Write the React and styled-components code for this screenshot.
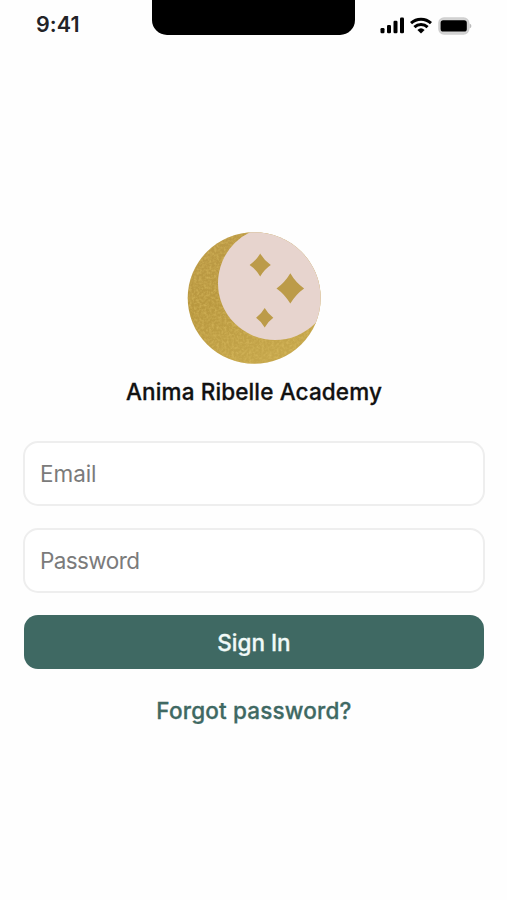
import React from "react";
import styled, { createGlobalStyle } from "styled-components";

const GlobalStyle = createGlobalStyle`
  * {
    box-sizing: border-box;
  }
  body {
    margin: 0;
    background: #fefefe;
    font-family: Inter, "Liberation Sans", sans-serif;
  }
`;

const SignalIcon = () => (
  <svg width="24" height="17" viewBox="0 0 24 17">
    <rect x="0.5" y="11" width="4" height="5.3" rx="1.2" />
    <rect x="7" y="8" width="4" height="8.3" rx="1.2" />
    <rect x="13.5" y="3.8" width="4" height="12.5" rx="1.2" />
    <rect x="20" y="0.6" width="4" height="15.7" rx="1.2" />
  </svg>
);

const WifiIcon = () => (
  <svg width="22" height="17" viewBox="0 0 22 17">
    <g fill="none" stroke="#000" strokeWidth="3">
      <path d="M1 6.1a14.6 14.6 0 0 1 20 0" />
      <path d="M4.4 10.2a9.6 9.6 0 0 1 13.2 0" />
    </g>
    <path d="M7.4 12.9a5.4 5.4 0 0 1 7.2 0L11 16.4z" />
  </svg>
);

const BatteryIcon = () => (
  <svg width="34" height="18" viewBox="0 0 34 18">
    <rect x="1" y="1" width="29.6" height="16" rx="5" fill="#d4d4d4" stroke="#cfcfcf" strokeWidth="1.6" />
    <rect x="2.6" y="3.3" width="26.2" height="11.2" rx="2.6" />
    <path d="M31.6 6.6q1.8.8 1.8 2.4t-1.8 2.4z" fill="#bbb" />
  </svg>
);

// four-pointed star around a centre
const star = (x, y, w, h) =>
  `M${x} ${y - h}Q${x + w * 0.4} ${y - h * 0.38} ${x + w} ${y}` +
  `Q${x + w * 0.4} ${y + h * 0.38} ${x} ${y + h}` +
  `Q${x - w * 0.4} ${y + h * 0.38} ${x - w} ${y}` +
  `Q${x - w * 0.4} ${y - h * 0.38} ${x} ${y - h}z`;

const MoonLogo = () => (
  <svg width="134" height="132" viewBox="0 0 134 132">
    <defs>
      <clipPath id="disc">
        <ellipse cx="67.2" cy="66" rx="66.5" ry="65.7" />
      </clipPath>
      <linearGradient id="gold" x1="0" y1="0" x2="0.5" y2="1">
        <stop offset="0" stopColor="#bc9a48" />
        <stop offset="0.5" stopColor="#b9983f" />
        <stop offset="1" stopColor="#c5a64b" />
      </linearGradient>
      {/* foil grain */}
      <filter id="grain" x="0" y="0" width="100%" height="100%" colorInterpolationFilters="sRGB">
        <feTurbulence type="fractalNoise" baseFrequency="0.4" numOctaves="2" seed="4" />
        <feColorMatrix values="0 0 0 0 0.86  0 0 0 0 0.74  0 0 0 0 0.38  1.3 0 0 0 -0.5" />
      </filter>
    </defs>
    <g clipPath="url(#disc)">
      <rect width="134" height="132" fill="url(#gold)" />
      <rect width="134" height="132" filter="url(#grain)" />
      <ellipse cx="88" cy="51.2" rx="57" ry="56.8" fill="#e7d4ce" />
      <path
        fill="#bc9b49"
        d={star(73.2, 33, 10.6, 11.4) + star(103.3, 56.4, 13.8, 15.2) + star(77.7, 85.7, 8.6, 9.7)}
      />
    </g>
  </svg>
);

const App = () => {
  return (
    <Screen>
      <GlobalStyle />
      <StatusBar>
        <Time>9:41</Time>
        <Notch />
        <StatusIcons>
          <SignalIcon />
          <WifiIcon />
          <BatteryIcon />
        </StatusIcons>
      </StatusBar>
      <Brand>
        <MoonLogo />
        <Title>Anima Ribelle Academy</Title>
      </Brand>
      <Form onSubmit={(e) => e.preventDefault()}>
        <Field type="email" placeholder="Email" $spacing="-0.05px" />
        <Field type="password" placeholder="Password" $spacing="-0.6px" />
        <SignInButton>Sign In</SignInButton>
      </Form>
      <ForgotLink href="#">Forgot password?</ForgotLink>
    </Screen>
  );
};

const Screen = styled.main`
  display: flex;
  flex-direction: column;
  align-items: center;
  width: 507px;
  height: 900px;
  overflow: hidden;
`;

const StatusBar = styled.header`
  display: grid;
  grid-template-columns: 152px 203px 152px;
  width: 100%;
  height: 50px;
`;

const Time = styled.div`
  padding: 10px 0 0 36px;
  font-size: 21.5px;
  font-weight: 600;
  line-height: 28px;
  letter-spacing: 0.1px;
  color: #222327;
`;

const Notch = styled.div`
  height: 35px;
  border-radius: 0 0 15px 15px;
  background: #000;
`;

const StatusIcons = styled.div`
  display: flex;
  align-items: flex-start;
  gap: 6px;
  padding: 17px 0 0 25px;
`;

const Brand = styled.section`
  display: flex;
  flex-direction: column;
  align-items: center;
  padding: 182px 0 0 1px;

  svg {
    display: block;
  }
`;

const Title = styled.h1`
  margin: 13px 0 0;
  font-size: 22.5px;
  font-weight: 500;
  line-height: 30px;
  letter-spacing: 0.13px;
  white-space: nowrap;
  color: #111;
  -webkit-text-stroke: 0.3px #111;
`;

const Form = styled.form`
  display: flex;
  flex-direction: column;
  width: 462px;
  margin: 34px 0 0 1px;
`;

const Field = styled.input`
  height: 65px;
  margin-bottom: 22px;
  padding: 0 15px 1px;
  border: 2px solid #eeeeee;
  border-radius: 15px;
  outline: none;
  background: #fff;
  font-family: inherit;
  font-size: 22.5px;
  letter-spacing: ${({ $spacing }) => $spacing};

  &::placeholder {
    color: #7b7b7b;
    opacity: 1;
  }
`;

const SignInButton = styled.button`
  height: 54px;
  margin: 0 1px;
  padding: 1px 0 0;
  border: none;
  border-radius: 14px;
  background: #3f6963;
  color: #f1faf8;
  font-family: inherit;
  font-size: 22.5px;
  font-weight: 500;
  -webkit-text-stroke: 0.3px #f1faf8;
`;

const ForgotLink = styled.a`
  margin: 27px 0 0 1px;
  font-size: 22.5px;
  font-weight: 500;
  line-height: 30px;
  letter-spacing: 0.17px;
  text-decoration: none;
  white-space: nowrap;
  color: #3f6963;
  -webkit-text-stroke: 0.3px #3f6963;
`;

export default App;
